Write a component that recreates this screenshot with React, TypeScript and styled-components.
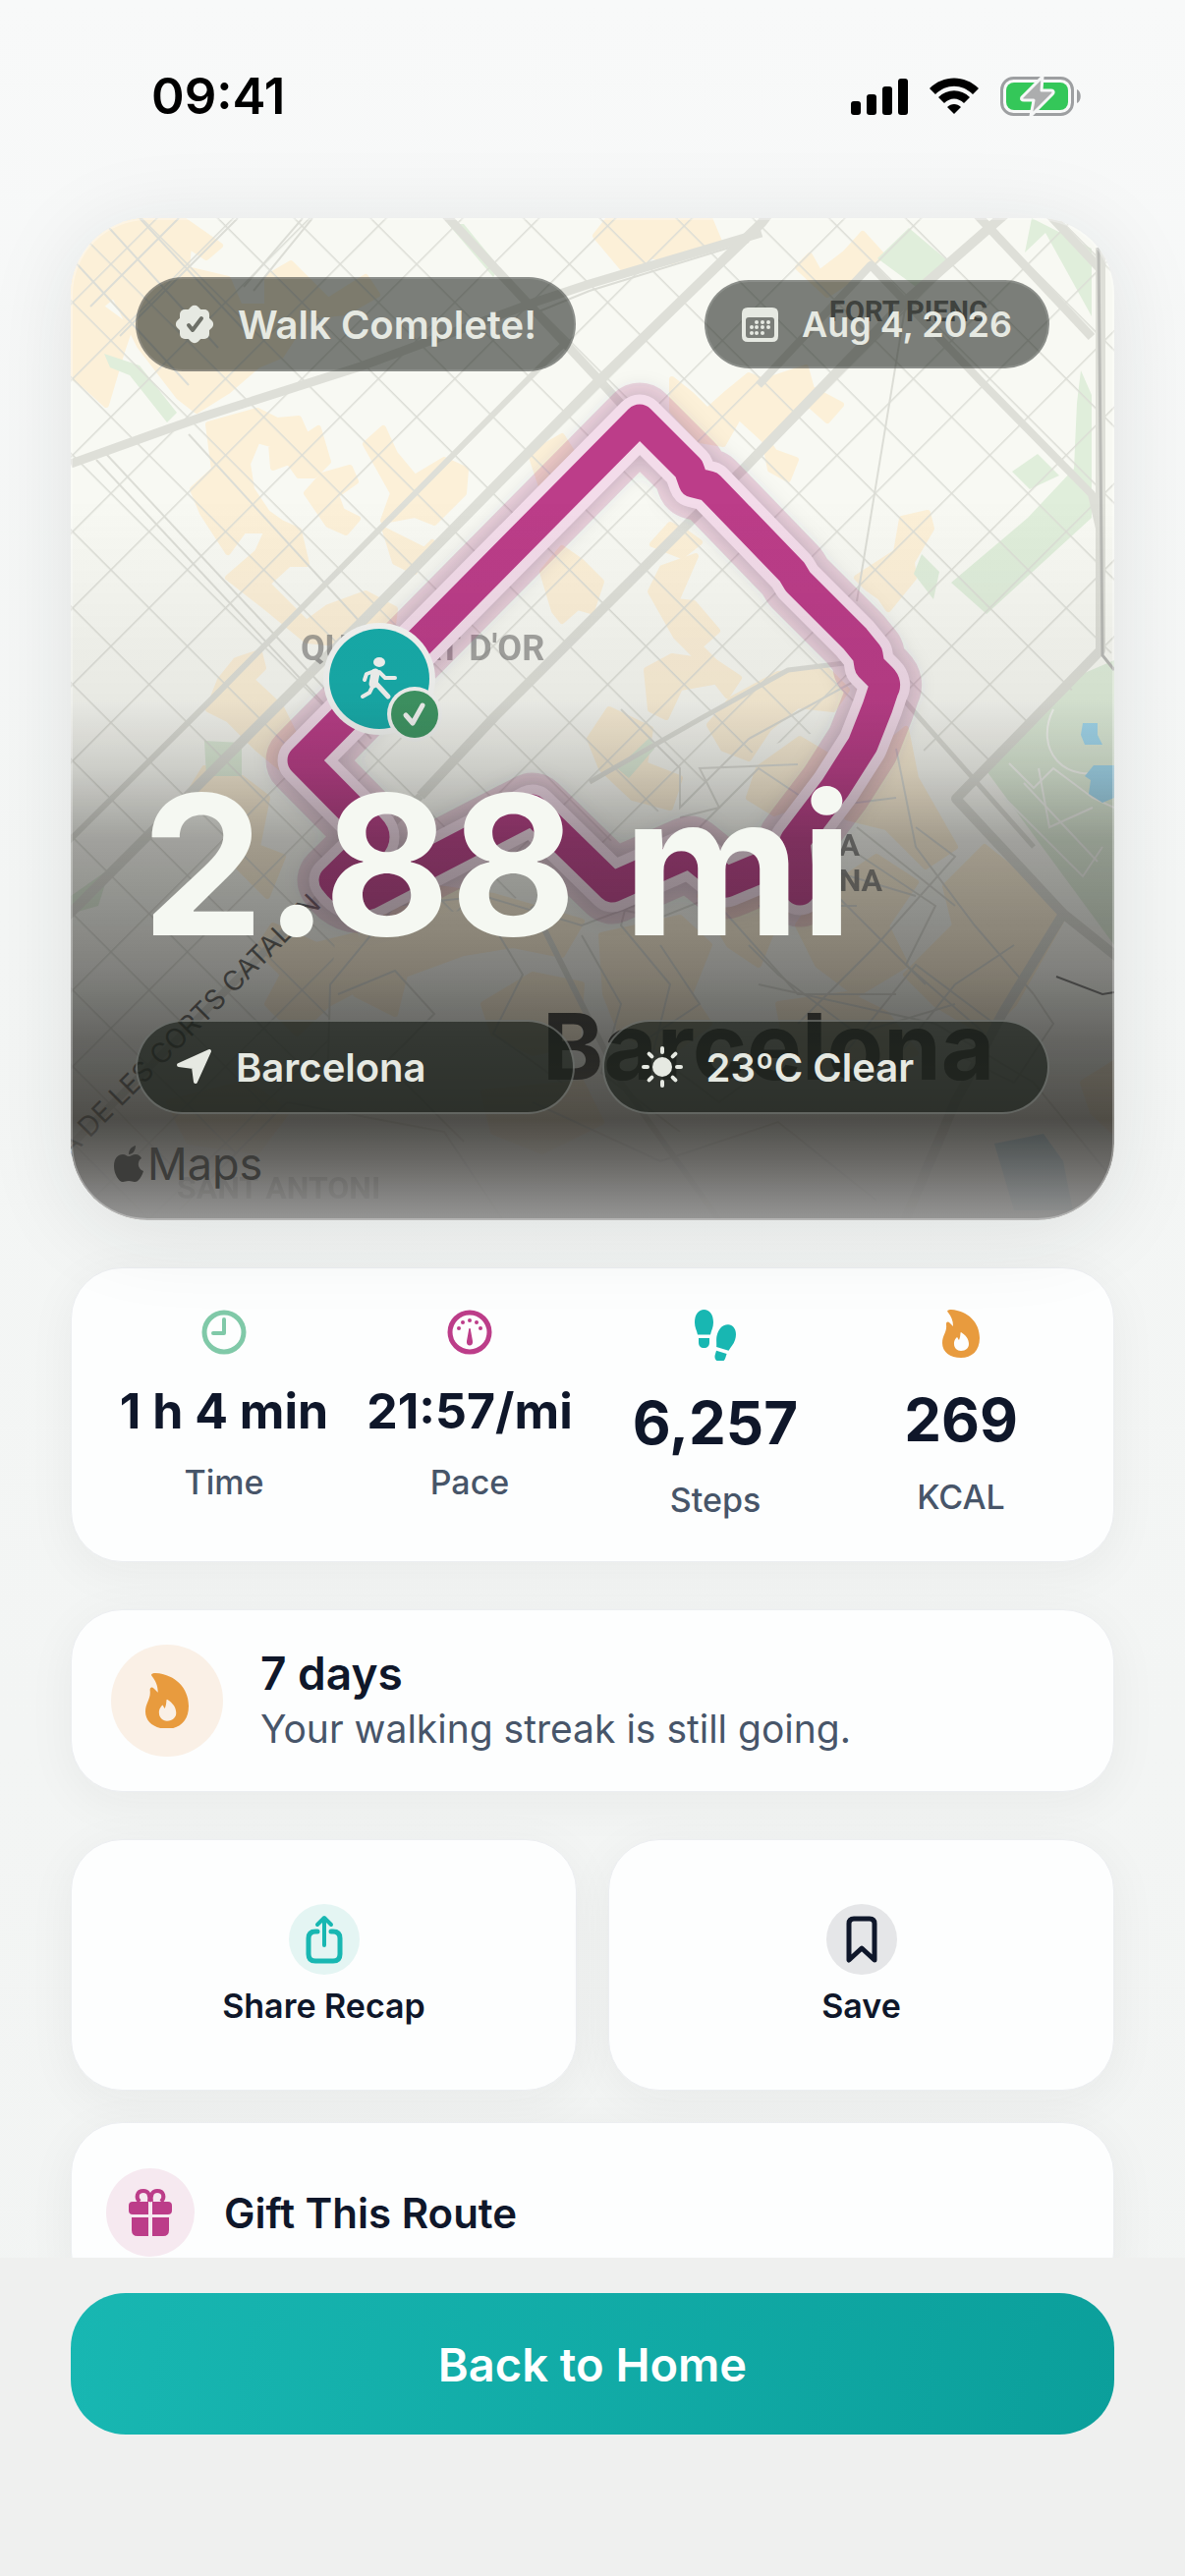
import type { ReactNode } from "react";
import styled, { createGlobalStyle } from "styled-components";

const colors = {
  ink: "#0f172a",
  slate: "#475569",
  teal: "#18b7b2",
  tealDark: "#0b9f9b",
  magenta: "#bc3d89",
  orange: "#e89b3e",
  mint: "#80c9a8",
  cream: "#f5f8f2",
  pillText: "#e6e9e2",
};

const GlobalStyle = createGlobalStyle`
  *, *::before, *::after {
    box-sizing: border-box;
  }

  body {
    margin: 0;
    font-family: Inter, "Liberation Sans", sans-serif;
    color: ${colors.ink};
    background: #f3f4f4;
  }

  button {
    font: inherit;
    color: inherit;
    border: 0;
    cursor: pointer;
  }

  svg {
    display: block;
    flex: none;
  }
`;

const Screen = styled.div`
  display: flex;
  flex-direction: column;
  height: 100vh;
  overflow: hidden;
  background: linear-gradient(180deg, #f8f9f9 0%, #f4f6f5 35%, #f2f4f3 100%);
`;

const StatusBar = styled.header`
  display: flex;
  flex: none;
  align-items: center;
  justify-content: space-between;
  padding: 66px 106px 92px 154px;
`;

const Clock = styled.time`
  font-size: 51px;
  font-weight: 600;
  line-height: 64px;
  color: #000;
`;

const StatusIcons = styled.div`
  display: flex;
  align-items: center;
  gap: 22px;
`;

const Content = styled.main`
  display: flex;
  flex: 1;
  flex-direction: column;
  gap: 48px;
  min-height: 0;
  padding: 0 72px;
`;

const Hero = styled.section`
  position: relative;
  display: flex;
  flex: none;
  flex-direction: column;
  aspect-ratio: 1062 / 1020;
  padding: 60px 66px 108px;
  border-radius: 78px;
  box-shadow: 0 12px 90px rgba(30, 38, 42, 0.1);
`;

const HeroMap = styled.div`
  position: absolute;
  inset: 0;
  overflow: hidden;
  border-radius: inherit;

  svg {
    width: 100%;
    height: 100%;
  }

  &::after {
    content: "";
    position: absolute;
    inset: 0;
    border: 2px solid rgba(255, 255, 255, 0.3);
    border-radius: inherit;
    background: linear-gradient(
        180deg,
        rgba(30, 30, 28, 0) 0%,
        rgba(30, 30, 28, 0) 28%,
        rgba(30, 30, 28, 0.07) 48%,
        rgba(30, 30, 28, 0.2) 55%,
        rgba(30, 30, 28, 0.4) 62%,
        rgba(30, 30, 28, 0.55) 75%,
        rgba(30, 30, 28, 0.68) 82%,
        rgba(48, 47, 43, 0.85) 90%,
        rgba(88, 87, 85, 0.9) 94%,
        rgba(146, 146, 145, 0.97) 100%
      )
      border-box;
  }
`;

const HeroTop = styled.div`
  position: relative;
  display: flex;
  align-items: center;
  justify-content: space-between;
`;

const HeroBottom = styled.div`
  position: relative;
  display: grid;
  grid-template-columns: 447fr 456fr;
  gap: 28px;
`;

const Distance = styled.h1`
  position: relative;
  margin: auto 0 58px;
  padding-left: 6px;
  font-size: 198px;
  font-weight: 700;
  line-height: 200px;
  white-space: nowrap;
  color: ${colors.cream};
`;

const Pill = styled.div<{ $compact?: boolean; $dark?: boolean }>`
  display: flex;
  align-items: center;
  gap: 24px;
  height: ${(p) => (p.$compact ? 90 : 96)}px;
  padding: 0 ${(p) => (p.$compact ? 36 : 38)}px;
  border: 2px solid rgba(255, 255, 255, ${(p) => (p.$dark ? 0.26 : 0.12)});
  border-radius: 48px;
  background: rgba(28, 34, 28, ${(p) => (p.$dark ? 0.68 : 0.57)});
  color: ${colors.pillText};
  font-size: ${(p) => (p.$compact ? 36 : 40)}px;
  font-weight: 600;
  white-space: nowrap;
`;

const Card = styled.section`
  flex: none;
  border: 1px solid #eceef1;
  border-radius: 52px;
  background: #fdfefe;
  box-shadow: 0 10px 50px rgba(30, 38, 42, 0.05);
`;

const Stats = styled(Card)`
  display: grid;
  grid-template-columns: repeat(4, 1fr);
  padding: 42px 30px;
`;

const Stat = styled.div`
  display: flex;
  flex-direction: column;
  align-items: center;
`;

const StatValue = styled.strong<{ $large?: boolean }>`
  margin: 28px 0 24px;
  font-size: ${(p) => (p.$large ? 60 : 50)}px;
  font-weight: 700;
  line-height: ${(p) => (p.$large ? 70 : 58)}px;
  white-space: nowrap;
`;

const StatLabel = styled.span`
  font-size: 34px;
  font-weight: 500;
  line-height: 40px;
  color: ${colors.slate};
`;

const Streak = styled(Card)`
  display: flex;
  align-items: center;
  gap: 38px;
  padding: 35px 40px;
`;

const Disc = styled.span<{ $size: number; $tint: string }>`
  display: flex;
  flex: none;
  align-items: center;
  justify-content: center;
  width: ${(p) => p.$size}px;
  height: ${(p) => p.$size}px;
  border-radius: 50%;
  background: ${(p) => p.$tint};
`;

const StreakTitle = styled.h2`
  margin: 0;
  font-size: 46px;
  font-weight: 600;
  line-height: 58px;
`;

const StreakText = styled.p`
  margin: 0;
  font-size: 39px;
  line-height: 56px;
  color: ${colors.slate};
`;

const Actions = styled.div`
  display: grid;
  flex: none;
  grid-template-columns: 1fr 1fr;
  gap: 32px;
`;

const ActionButton = styled(Card).attrs({ as: "button", type: "button" })`
  display: flex;
  flex-direction: column;
  align-items: center;
  gap: 12px;
  padding: 65px 20px;
  font-size: 34px;
  font-weight: 600;
  line-height: 40px;
`;

const GiftButton = styled(Card).attrs({ as: "button", type: "button" })`
  display: flex;
  align-items: center;
  gap: 30px;
  padding: 46px 35px;
  font-size: 42px;
  font-weight: 600;
  text-align: left;
`;

const ActionGroup = styled.div`
  display: flex;
  flex-direction: column;
  gap: 32px;
`;

const Footer = styled.footer`
  position: relative;
  flex: none;
  padding: 36px 72px 144px;
  background: #eff0ef;
`;

const HomeButton = styled.button`
  width: 100%;
  height: 144px;
  border-radius: 56px;
  background: linear-gradient(100deg, ${colors.teal}, ${colors.tealDark});
  color: #fff;
  font-size: 47px;
  font-weight: 600;
`;

/* ---------- map ---------- */

const blocks = [
  "0,60 40,0 112,0 152,28 138,40 120,28 118,52 160,62 172,90 200,90 200,60 224,46 262,84 300,60 312,78 280,96 240,100 214,140 190,150 160,176 128,196 110,182 70,130 44,78 30,90 60,112 52,136 36,190 14,170 0,160",
  "140,210 190,196 210,206 232,204 240,222 252,214 262,248 248,262 232,262 222,248 206,254 204,230 190,226 180,250 184,276 200,300 214,310 232,318 240,352 222,352 200,372 240,412 262,396 300,382 330,398 326,430 290,424 262,432 240,430 196,394 160,366 190,340 200,318 176,318 160,340 134,300 124,276 146,256",
  "300,230 318,214 330,240 350,264 380,246 402,256 400,280 370,310 350,302 318,308 328,280",
  "240,280 256,262 284,254 290,268 270,282 276,298 292,306 280,320 262,312",
  "320,318 360,338 368,330 350,360 330,350",
  "152,470 168,450 192,442 196,458 184,470 214,498 230,530 214,560 190,540 160,510 140,500",
  "468,240 500,222 514,244 536,236 528,256 496,280 480,276",
  "480,360 500,336 520,350 540,370 530,400 516,396 500,410 492,400",
  "548,0 650,0 660,24 612,44 590,38 566,56 534,18",
  "740,50 752,38 762,56 788,36 806,16 826,38 800,58 770,78",
  "612,164 632,180 648,196 668,178 690,160 706,166 748,152 754,174 784,190 770,206 752,190 736,200 706,222 716,238 738,246 730,266 712,256 706,226 680,202 664,230 640,226 612,196",
  "800,366 840,340 846,306 872,300 876,316 856,350 858,366 832,398 824,386 810,376",
  "590,380 602,356 636,344 616,390 634,392 658,420 640,436 656,452 680,468 668,486 640,450 616,426",
  "592,332 610,312 626,320 640,330 622,344",
  "586,460 612,446 640,450 654,472 620,478 606,508 590,500",
  "672,490 720,464 770,460 790,480 776,500 740,496 710,520 690,550 664,540 650,516",
  "548,500 590,520 584,556 620,570 610,600 572,590 540,560 528,530",
  "700,560 742,530 772,548 760,590 716,606 690,590",
  "136,560 174,570 200,590 190,640 216,650 200,690 170,660 186,620 120,586",
  "206,720 250,740 290,730 300,780 262,800 230,830 200,800 216,770 190,744",
  "300,700 360,680 430,690 520,716 500,750 450,740 400,748 340,770 330,810 290,790",
  "420,800 470,770 520,780 516,840 470,850 430,830",
  "540,730 620,712 650,740 630,790 650,820 610,850 560,830 544,790",
  "640,690 700,660 740,690 712,730 700,760 670,740",
  "760,690 820,650 860,676 830,720 850,760 800,790 760,760 740,720",
  "930,640 1000,696 1010,712 960,800 930,830 880,800 850,770 900,720 890,680",
  "720,800 790,790 830,810 860,850 800,870 730,850",
  "800,560 850,520 860,570 900,640 870,660 830,620 790,610",
  "100,900 180,880 220,910 190,950 120,940",
  "420,890 520,880 540,920 480,950 430,930",
  "1030,880 1062,860 1062,930 1040,910",
];

const parks = [
  "34,138 70,150 108,198 98,208 60,160 40,152",
  "384,6 400,6 436,50 430,60",
  "853,10 892,43 867,75 821,41",
  "978,0 1039,31 1039,100 992,15 971,35",
  "1028,155 1039,180 1039,305 932,403 896,371 974,305 1021,255 1024,188",
  "958,258 984,240 1006,262 976,276",
  "866,342 884,360 878,388 858,362",
  "1062,450 1020,468 930,560 1062,740",
  "136,532 174,534 174,568 138,568",
  "0,690 40,662 28,700 0,708",
  "556,560 590,528 594,540 568,570",
];

const roads = [
  { d: "M0 250L95 216L138 201L295 151L474 85L528 67L703 15", w: 9 },
  { d: "M-20 727L299 408L538 165L703 5L716 -12", w: 10 },
  { d: "M-20 652L145 488L481 148L500 130", w: 6 },
  { d: "M377 -8L538 165L590 222", w: 9 },
  { d: "M960 -12L849 85L685 255L631 308L528 411L431 508L356 588", w: 10 },
  { d: "M356 588L100 844L-20 964", w: 8 },
  { d: "M918 -8L1039 121", w: 9 },
  { d: "M990 -10L1046 50", w: 9 },
  { d: "M700 170L814 48L930 170L1039 281L1048 320", w: 8 },
  { d: "M1048 30V440L901 591L1010 708L1070 756", w: 10 },
  { d: "M1010 708L949 808L900 900L849 1020", w: 10 },
  { d: "M528 574L640 510L730 460L812 450L980 640", w: 5 },
  { d: "M470 700L560 880L660 1020", w: 6 },
];

const lanes = [
  "M26 246L300 540", "M36 240L306 530", "M120 220L330 450",
  "M0 40L120 170", "M30 0L150 132", "M70 0L180 118", "M50 120L170 0", "M20 90L110 0",
  "M176 70L236 0", "M186 74L246 0", "M850 86L800 390", "M474 96L528 74L690 24",
  "M262 860L264 780L330 700L420 690L520 720L600 690", "M272 790L330 766L370 810L320 860L400 940",
  "M520 730L560 800L540 870L620 930", "M540 700L600 712L680 680L760 660L860 690",
  "M600 740L640 800L580 840L660 900L740 840", "M690 740L720 770L800 830L900 800",
  "M740 820L820 740L900 650L860 620", "M780 860L860 760L940 820", "M820 880L900 780L960 740",
  "M640 620L700 560L760 600L840 590", "M840 540L860 640L920 720L980 790",
  "M800 620L900 700", "M770 680L870 780", "M620 610L660 600L640 560L740 556",
  "M560 500L620 560L620 600L690 530L800 470", "M430 720L460 770L430 830L500 880",
  "M660 700L740 790L840 790", "M790 640L880 700L850 760L930 830", "M700 700L800 700",
  "M110 1010L220 900L380 930L440 1020", "M580 640L560 720L610 780L590 860",
  "M470 900L600 960L720 920L820 1000", "M700 780L880 820L980 880L1062 980",
  "M980 790L1000 820L960 880L900 850",
];

const parkPaths = [
  "M955 555L980 580L1000 560L1040 590L1062 600", "M950 590L1030 670L1050 640",
  "M970 575L1045 655", "M985 560L996 620L1040 600", "M1000 500C980 540 1010 580 1062 560",
];

const routePath =
  "M579 205L236 552L305 622Q313 630 305 638L268 674Q284 696 304 688L470 602L551 681L630 646L667 676L715 656L742 684L737 634L778 580L806 536L821 498L827 480Q831 474 825 468L813 456L811 444L798 428L740 370L734 360L650 273L634 269L629 255Z";

const WalkMap = () => (
  <svg viewBox="0 0 1062 1020" preserveAspectRatio="xMidYMid slice" aria-hidden="true">
    <defs>
      <pattern
        id="streets"
        width="55"
        height="55"
        patternUnits="userSpaceOnUse"
        patternTransform="translate(2 318) rotate(45)"
      >
        <path d="M0 0H55M0 0V55" stroke="#dcddd6" strokeWidth="3" />
      </pattern>
      <filter id="routeShadow" x="-20%" y="-20%" width="140%" height="140%">
        <feGaussianBlur stdDeviation="12" />
      </filter>
    </defs>
    <rect width="1062" height="1020" fill="#f8f9f3" />
    {blocks.map((points) => (
      <polygon key={points} points={points} fill="#fcf0d8" stroke="#fcf0d8" strokeWidth="6" strokeLinejoin="round" />
    ))}
    {parks.map((points) => (
      <polygon key={points} points={points} fill="#e0eedb" />
    ))}
    <path d="M0 0H1062V440L901 591L840 500L700 540L540 640L440 700L270 720L260 860L100 1020H0Z" fill="url(#streets)" />
    <g fill="none" stroke="#dcddd6" strokeWidth="2">
      {lanes.map((d) => (
        <path key={d} d={d} />
      ))}
    </g>
    <g fill="none" stroke="#f6f8f3" strokeWidth="2">
      {parkPaths.map((d) => (
        <path key={d} d={d} />
      ))}
    </g>
    {roads.map((road) => (
      <path key={road.d} d={road.d} fill="none" stroke="#dedfd8" strokeWidth={road.w} strokeLinejoin="round" />
    ))}
    <path d="M1046 30L1050 445L1062 460" fill="none" stroke="#b9bab6" strokeWidth="3" />
    <path d="M1003 772L1050 790L1062 788" fill="none" stroke="#777" strokeWidth="2" />
    <path d="M1030 514H1045V526L1050 536H1032L1028 526ZM1041 557H1062V590L1050 595L1036 586L1038 572L1032 568Z" fill="#a5dcf2" />
    <path d="M940 942L990 932L1010 960L1020 1010H960Z" fill="#9fcfe4" />

    <g fill="#6d6d6c" fontFamily="Roboto, sans-serif" fontWeight="700">
      <text x="234" y="450" fontSize="36" opacity="0.6">
        QUADRAT D'OR
      </text>
      <text x="772" y="105" fontSize="29">
        FORT PIENC
      </text>
      <g fontSize="32" opacity="0.8">
        <text x="803" y="649" textAnchor="end">
          SANTA
        </text>
        <text x="826" y="685" textAnchor="end">
          CATERINA
        </text>
        <text x="108" y="998">
          SANT ANTONI
        </text>
      </g>
    </g>
    <text
      transform="translate(256 700) rotate(-45)"
      textAnchor="end"
      fontFamily="Inter, sans-serif"
      fontSize="28"
      fill="#2b2b2b"
      fillOpacity="0.75"
    >
      A DE LES CORTS CATALAN
    </text>

    <g fill="none" strokeLinejoin="round">
      <path d={routePath} stroke="#3a4a55" strokeOpacity="0.3" strokeWidth="50" filter="url(#routeShadow)" />
      <path d={routePath} stroke="#bc3d89" strokeOpacity="0.2" strokeWidth="75" />
      <path d={routePath} stroke="#f3dcea" strokeWidth="51" />
      <path d={routePath} stroke={colors.magenta} strokeWidth="31" />
    </g>

    <g transform="translate(248 398)">
      <circle cx="66" cy="71" r="57" fill="#f7f8f6" />
      <circle cx="66" cy="71" r="51" fill="#17aeac" />
      <g fill="none" stroke="#f7f8f6" strokeLinecap="round" strokeLinejoin="round">
        <ellipse cx="66" cy="54" rx="6" ry="5" fill="#f7f8f6" stroke="none" />
        <path d="M62 65L60 76" strokeWidth="9" />
        <path d="M61 63L53 66L51 72" strokeWidth="4" />
        <path d="M66 64L72 70L82 70" strokeWidth="4" />
        <path d="M63 76L75 89" strokeWidth="5" />
        <path d="M59 79L56 85L49 89" strokeWidth="4" />
      </g>
      <circle cx="102" cy="107" r="28" fill="#f7f8f6" />
      <circle cx="102" cy="107" r="24" fill="#3f9865" />
      <path d="M93 108L100 116L110 98" fill="none" stroke="#f7f8f6" strokeWidth="5" strokeLinecap="round" strokeLinejoin="round" />
    </g>

    <text x="480" y="877" fontFamily="Inter, sans-serif" fontWeight="700" fontSize="94" fill="#353533">
      Barcelona
    </text>
  </svg>
);

const MapCredit = styled.div`
  position: absolute;
  left: 44px;
  bottom: 29px;
  display: flex;
  align-items: center;
  gap: 4px;
  font-size: 45px;
  line-height: 56px;
  color: #3c3c3a;
`;

/* ---------- icons ---------- */

const AppleMark = () => (
  <svg width="30" height="38" viewBox="0 0 30 38" fill="currentColor">
    <path d="M15 11C17 11 19 9 22 9C25 9 27 11 28 13C23 16 24 24 30 26C28 32 25 37 21 37C19 37 18 36 15 36C12 36 11 37 9 37C5 37 0 29 0 21C0 13 4 9 9 9C12 9 13 11 15 11ZM15 9C15 4 18 1 22 0C22 5 19 9 15 9Z" />
  </svg>
);

const SignalIcon = () => (
  <svg width="58" height="38" viewBox="0 0 58 38">
    <rect x="0" y="24" width="10" height="14" rx="3" />
    <rect x="16" y="17" width="10" height="21" rx="3" />
    <rect x="32" y="9" width="10" height="29" rx="3" />
    <rect x="48" y="1" width="10" height="37" rx="3" />
  </svg>
);

const WifiIcon = () => (
  <svg width="50" height="38" viewBox="0 0 50 38">
    <path d="M0 11C14 -3 36 -3 50 11L44 17C33 6 17 6 6 17Z" />
    <path d="M9 20C18 11 32 11 41 20L35 26C29 20 21 20 15 26Z" />
    <path d="M18 30C22 26 28 26 32 30L25 37Z" />
  </svg>
);

const BatteryIcon = () => (
  <svg width="82" height="42" viewBox="0 0 82 42">
    <rect x="1.5" y="2.5" width="72" height="37" rx="12" fill="none" stroke="#9d9fa1" strokeWidth="3" />
    <rect x="6" y="7" width="63" height="28" rx="8" fill="#34c759" />
    <path d="M78 14C83 16 83 26 78 28Z" fill="#9d9fa1" />
    <path
      d="M43 1L22 22C21 24 22 25 24 25H34L31 41L53 19C55 17 54 15 52 15H42Z"
      fill="#acadae"
      stroke="#f6f7f7"
      strokeWidth="3"
      strokeLinejoin="round"
    />
  </svg>
);

const VerifiedIcon = () => (
  <svg width="40" height="40" viewBox="0 0 40 40">
    <rect x="5" y="5" width="30" height="30" rx="5" fill="currentColor" />
    <rect x="5" y="5" width="30" height="30" rx="5" fill="currentColor" transform="rotate(45 20 20)" />
    <path d="M14 21L18 26L27 14" fill="none" stroke="#6d7068" strokeWidth="4" strokeLinecap="round" strokeLinejoin="round" />
  </svg>
);

const CalendarIcon = () => (
  <svg width="37" height="35" viewBox="0 0 37 35">
    <path
      fill="currentColor"
      fillRule="evenodd"
      d="M6 0H31Q37 0 37 6V29Q37 35 31 35H6Q0 35 0 29V6Q0 0 6 0ZM7 10Q4 10 4 13V28Q4 31 7 31H30Q33 31 33 28V13Q33 10 30 10Z"
    />
    <g fill="currentColor">
      {[[15, 15], [21, 15], [27, 15], [10, 20], [15, 20], [21, 20], [27, 20], [10, 26], [15, 26], [21, 26]].map(
        ([cx, cy]) => (
          <circle key={`${cx}-${cy}`} cx={cx} cy={cy} r="2" />
        )
      )}
    </g>
  </svg>
);

const ArrowIcon = () => (
  <svg width="38" height="38" viewBox="0 0 38 38">
    <path d="M4 17L35 3L21 34L19 19Z" fill="currentColor" stroke="currentColor" strokeWidth="4" strokeLinejoin="round" />
  </svg>
);

const SunIcon = () => (
  <svg width="42" height="42" viewBox="0 0 42 42">
    <circle cx="21" cy="21" r="10" fill="currentColor" />
    <g stroke="currentColor" strokeWidth="4" strokeLinecap="round">
      {[0, 45, 90, 135, 180, 225, 270, 315].map((angle) => (
        <path key={angle} d="M21 2V6" transform={`rotate(${angle} 21 21)`} />
      ))}
    </g>
  </svg>
);

const TimeIcon = () => (
  <svg width="46" height="46" viewBox="0 0 46 46" fill="none" stroke={colors.mint}>
    <circle cx="23" cy="23" r="20" strokeWidth="5" />
    <path d="M23 10V24H12" strokeWidth="4" strokeLinecap="round" strokeLinejoin="round" />
  </svg>
);

const PaceIcon = () => (
  <svg width="46" height="46" viewBox="0 0 46 46" fill={colors.magenta}>
    <circle cx="23" cy="23" r="20" fill="none" stroke={colors.magenta} strokeWidth="5" />
    <circle cx="12" cy="19" r="2" />
    <circle cx="16" cy="13" r="2" />
    <circle cx="23" cy="11" r="2" />
    <circle cx="30" cy="13" r="2" />
    <circle cx="34" cy="19" r="2" />
    <path d="M23 19C24 19 24 20 24 21L26 32C27 38 19 38 20 32L22 21C22 20 22 19 23 19Z" />
  </svg>
);

const shoe =
  "M9.5 0C15 0 19 5 19 13C19 18 17 21 16 25.5H3C2 21 0 18 0 13C0 5 4 0 9.5 0ZM4 29H15V33C15 37 13 39 9.5 39C6 39 4 37 4 33Z";

const StepsIcon = () => (
  <svg width="42" height="52" viewBox="0 0 42 52" fill={colors.teal}>
    <path d={shoe} />
    <path d={shoe} transform="translate(32 28) rotate(17) translate(-9.5 -13)" />
  </svg>
);

const FlameIcon = ({ width = 38 }: { width?: number }) => (
  <svg width={width} viewBox="0 0 38 49" fill={colors.orange}>
    <path
      fillRule="evenodd"
      d="M6 3C4 1 6 0 9 0C26 1 38 13 38 29C38 42 30 49 19 49C8 49 0 43 0 34C0 26 5 23 4 15C4 12 6 12 8 14L11 17C11 11 9 7 6 3ZM19 23C18 23 19 27 17 31C16 30 16 29 15 28C12 31 12 33 12 35C12 39 15 42 19 42C24 42 27 39 27 35C27 30 24 26 19 23Z"
    />
  </svg>
);

const ShareIcon = () => (
  <svg width="38" height="50" viewBox="0 0 38 50" fill="none" stroke={colors.teal} strokeWidth="5" strokeLinecap="round" strokeLinejoin="round">
    <path d="M12 17H10Q3 17 3 24V40Q3 47 10 47H28Q35 47 35 40V24Q35 17 28 17H26" />
    <path d="M19 31V4M12 10L19 3L26 10" strokeWidth="4" />
  </svg>
);

const BookmarkIcon = () => (
  <svg width="32" height="48" viewBox="0 0 32 48" fill="none" stroke={colors.ink} strokeWidth="5" strokeLinejoin="round">
    <path d="M3 45V8Q3 3 8 3H24Q29 3 29 8V45L16 33Z" />
  </svg>
);

const GiftIcon = () => (
  <svg width="44" height="48" viewBox="0 0 44 48" fill={colors.magenta}>
    <path d="M20 26H4Q0 26 0 22V17Q0 13 4 13H20ZM24 13H40Q44 13 44 17V22Q44 26 40 26H24ZM20 29V48H9Q3 48 3 42V29ZM24 29H41V42Q41 48 35 48H24Z" />
    <path d="M21 13C22 6 20 2 15 2C8 2 7 9 11 13M23 13C22 6 24 2 29 2C36 2 37 9 33 13" fill="none" stroke={colors.magenta} strokeWidth="4" />
  </svg>
);

type StatItem = { icon: ReactNode; value: string; label: string; large?: boolean };

const stats: StatItem[] = [
  { icon: <TimeIcon />, value: "1 h 4 min", label: "Time" },
  { icon: <PaceIcon />, value: "21:57/mi", label: "Pace" },
  { icon: <StepsIcon />, value: "6,257", label: "Steps", large: true },
  { icon: <FlameIcon />, value: "269", label: "KCAL", large: true },
];

const App = () => {
  return (
    <Screen>
      <GlobalStyle />
      <StatusBar>
        <Clock>09:41</Clock>
        <StatusIcons>
          <SignalIcon />
          <WifiIcon />
          <BatteryIcon />
        </StatusIcons>
      </StatusBar>

      <Content>
        <Hero>
          <HeroMap>
            <WalkMap />
          </HeroMap>
          <MapCredit>
            <AppleMark />
            Maps
          </MapCredit>
          <HeroTop>
            <Pill>
              <VerifiedIcon />
              Walk Complete!
            </Pill>
            <Pill $compact>
              <CalendarIcon />
              Aug 4, 2026
            </Pill>
          </HeroTop>
          <Distance>2.88 mi</Distance>
          <HeroBottom>
            <Pill $dark>
              <ArrowIcon />
              Barcelona
            </Pill>
            <Pill $dark>
              <SunIcon />
              23ºC Clear
            </Pill>
          </HeroBottom>
        </Hero>

        <Stats>
          {stats.map((stat) => (
            <Stat key={stat.label}>
              {stat.icon}
              <StatValue $large={stat.large}>{stat.value}</StatValue>
              <StatLabel>{stat.label}</StatLabel>
            </Stat>
          ))}
        </Stats>

        <Streak>
          <Disc $size={114} $tint="#faf0e6">
            <FlameIcon width={44} />
          </Disc>
          <div>
            <StreakTitle>7 days</StreakTitle>
            <StreakText>Your walking streak is still going.</StreakText>
          </div>
        </Streak>

        <ActionGroup>
          <Actions>
            <ActionButton>
              <Disc $size={72} $tint="#e4f5f3">
                <ShareIcon />
              </Disc>
              Share Recap
            </ActionButton>
            <ActionButton>
              <Disc $size={72} $tint="#e5e6e8">
                <BookmarkIcon />
              </Disc>
              Save
            </ActionButton>
          </Actions>
          <GiftButton>
            <Disc $size={90} $tint="#f6e9f0">
              <GiftIcon />
            </Disc>
            Gift This Route
          </GiftButton>
        </ActionGroup>
      </Content>

      <Footer>
        <HomeButton type="button">Back to Home</HomeButton>
      </Footer>
    </Screen>
  );
};

export default App;
